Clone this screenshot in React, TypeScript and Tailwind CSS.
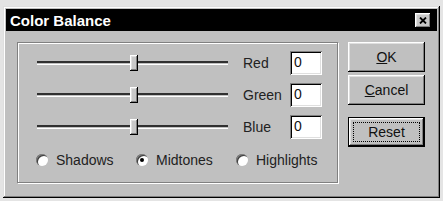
import type { ReactNode } from 'react';

const raised =
  'shadow-[inset_-1px_-1px_#000,inset_1px_1px_#fff,inset_-2px_-2px_#808080,inset_2px_2px_#dfdfdf]';
const sunken =
  'shadow-[inset_1px_1px_#808080,inset_-1px_-1px_#fff,inset_2px_2px_#000,inset_-2px_-2px_#dfdfdf]';

function Slider() {
  return (
    <div className="relative w-[191px] h-[16px]">
      <div className="absolute left-0 right-0 top-[6px] h-[4px] shadow-[inset_0_2px_#303030,inset_0_-1px_#fff]" />
      <div className={`absolute left-[93px] top-0 w-[8px] h-[16px] bg-[#c8c8c8] ${raised}`} />
    </div>
  );
}

function ValueRow({ label }: { label: string }) {
  return (
    <div className="flex items-center h-[24px]">
      <Slider />
      <span className="ml-[15px] w-[47px] text-[14px] leading-none text-[#222]">{label}</span>
      <div className={`w-[32px] h-[24px] bg-white pl-[4px] pt-[4px] text-[14px] leading-none ${sunken}`}>
        0
      </div>
    </div>
  );
}

function Radio({ label, checked }: { label: string; checked?: boolean }) {
  return (
    <div className="flex items-center w-[100px]">
      <span className="w-[12px] h-[12px] rounded-full bg-white shadow-[inset_1px_1px_#808080,inset_2px_2px_#404040] flex items-center justify-center">
        {checked && <span className="w-[4px] h-[4px] rounded-full bg-black" />}
      </span>
      <span className="ml-[8px] text-[14px] leading-none text-[#222]">{label}</span>
    </div>
  );
}

function Button({ children, isDefault }: { children: ReactNode; isDefault?: boolean }) {
  if (isDefault) {
    return (
      <div className="w-[77px] h-[30px] border border-black">
        <div className={`w-full h-full p-[4px] ${raised}`}>
          <div className="w-full h-full border border-dotted border-black flex items-center justify-center text-[14px]">
            {children}
          </div>
        </div>
      </div>
    );
  }
  return (
    <div className={`w-[77px] h-[30px] flex items-center justify-center text-[14px] ${raised}`}>
      {children}
    </div>
  );
}

export default function App() {
  return (
    <div className="w-[443px] h-[201px] bg-[#e4e4e4] pt-[6px] pl-[3px] font-['Liberation_Sans',Arial,sans-serif] text-[#111]">
      <div className="w-[437px] h-[192px] bg-[#c0c0c0] p-[3px] shadow-[inset_-1px_-1px_#000,inset_1px_1px_#dfdfdf,inset_-2px_-2px_#808080,inset_2px_2px_#fff]">
        {/* Title bar */}
        <div className="h-[22px] bg-black flex items-center pl-[4px] pr-[6px]">
          <span className="text-white font-bold text-[15px] leading-none">Color Balance</span>
          <div className={`ml-auto w-[16px] h-[15px] bg-[#c8c8c8] flex items-center justify-center ${raised}`}>
            <svg width="8" height="7" viewBox="0 0 8 7">
              <path d="M1 0.5 L7 6.5 M7 0.5 L1 6.5" stroke="#000" strokeWidth="1.8" />
            </svg>
          </div>
        </div>

        <div className="flex pl-[11px] pt-[11px]">
          {/* Group box */}
          <div className="w-[321px] h-[141px] border border-[#808080] shadow-[inset_1px_1px_#fff,1px_1px_#fff] pl-[19px] pt-[8px]">
            <div className="flex flex-col gap-[8px]">
              <ValueRow label="Red" />
              <ValueRow label="Green" />
              <ValueRow label="Blue" />
            </div>
            <div className="flex mt-[14px] -ml-[1px]">
              <Radio label="Shadows" />
              <Radio label="Midtones" checked />
              <Radio label="Highlights" />
            </div>
          </div>

          {/* Buttons */}
          <div className="ml-[10px] flex flex-col">
            <Button>
              <span className="underline">O</span>K
            </Button>
            <div className="mt-[3px]">
              <Button>
                <span className="underline">C</span>ancel
              </Button>
            </div>
            <div className="mt-[12px]">
              <Button isDefault>Reset</Button>
            </div>
          </div>
        </div>
      </div>
    </div>
  );
}
